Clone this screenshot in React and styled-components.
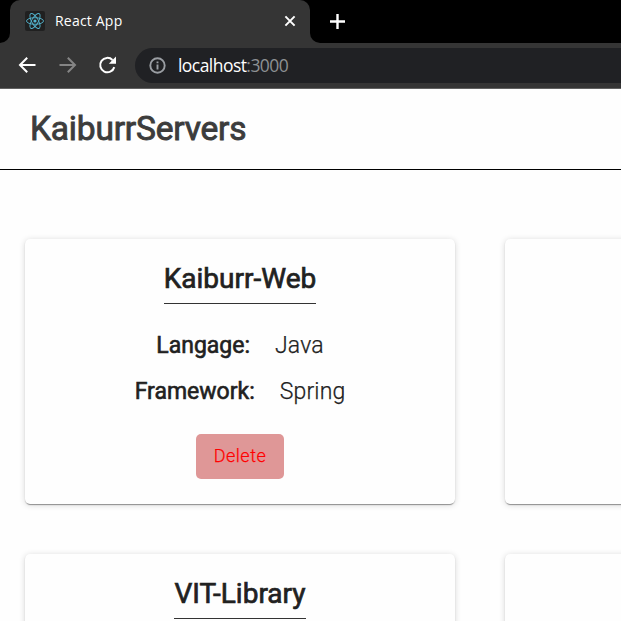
import React from 'react';
import styled, { createGlobalStyle } from 'styled-components';

const GlobalStyle = createGlobalStyle`
  * { box-sizing: border-box; }
  html, body { margin: 0; padding: 0; background: #fefefe; overflow: hidden; }
`;

const Window = styled.div`
  width: 621px;
  height: 621px;
  overflow: hidden;
  background: #fefefe;
  font-family: Roboto, sans-serif;
  color: #212121;
`;

const TabStrip = styled.div`
  display: flex;
  height: 43px;
  background: #353535;
`;

const StripEdge = styled.div`
  width: 10px;
  background: #000;
  border-bottom-right-radius: 10px;
`;

const TabSlot = styled.div`
  display: flex;
  background: linear-gradient(#000 0 20px, #353535 20px);
`;

const Tab = styled.div`
  width: 300px;
  display: flex;
  align-items: center;
  padding: 0 13px 1px 15px;
  background: #353535;
  border-radius: 10px 10px 0 0;
`;

const TabTitle = styled.span`
  flex: 1;
  margin-left: 10px;
  font: 14px/20px "Open Sans", sans-serif;
  letter-spacing: 0.2px;
  color: #fff;
`;

const StripRest = styled.div`
  flex: 1;
  display: flex;
  align-items: center;
  padding: 0 0 1px 19px;
  background: #000;
  border-bottom-left-radius: 10px;
`;

const Toolbar = styled.div`
  display: flex;
  align-items: center;
  height: 46px;
  padding: 0 0 1px 17px;
  background: #353535;
  border-bottom: 1px solid #616161;
`;

const NavIcon = styled.svg`
  display: block;
  width: 20px;
  height: 20px;
  margin-right: 20px;
  flex: none;
`;

const AddressBar = styled.div`
  flex: 1;
  height: 35px;
  margin: 1px 0 0 -2px;
  display: flex;
  align-items: center;
  padding-left: 14px;
  background: #202124;
  border-radius: 18px 0 0 18px;
`;

const Address = styled.span`
  margin: 0 0 2px 12px;
  font: 17.5px/24px "Open Sans", sans-serif;
  letter-spacing: -0.55px;
  color: #fff;
`;

const Port = styled.span`
  color: #8d9093;
`;

const Header = styled.header`
  height: 81px;
  padding: 0 30px 1px;
  display: flex;
  align-items: center;
  background: #fefefe;
  border-bottom: 1px solid #000;
`;

const Brand = styled.h1`
  margin: 0;
  font-size: 33.5px;
  line-height: 40px;
  font-weight: 400;
  letter-spacing: -0.2px;
  -webkit-text-stroke: 0.9px #3c3c3c;
  color: #3c3c3c;
`;

const Grid = styled.main`
  display: grid;
  grid-template-columns: 430px 430px;
  grid-auto-rows: 265px;
  gap: 50px;
  padding: 69px 25px;
`;

const Card = styled.section`
  display: flex;
  flex-direction: column;
  align-items: center;
  background: #fefefe;
  border-radius: 5px;
  box-shadow: 0 3px 1px -2px rgba(0, 0, 0, 0.2), 0 1px 1px rgba(0, 0, 0, 0.22),
    0 1px 6px rgba(0, 0, 0, 0.16);
`;

const CardTitle = styled.h2`
  margin: 20px 0 19px;
  height: 45px;
  border-bottom: 1px solid #333;
  font-size: 28px;
  line-height: 40px;
  font-weight: 400;
  -webkit-text-stroke: 0.7px #212121;
`;

const Detail = styled.div`
  display: flex;
  gap: 25px;
  height: 46px;
  font-size: 23px;
  line-height: 46px;
`;

const Label = styled.span`
  -webkit-text-stroke: 0.6px #212121;
`;

const Value = styled.span`
  font-weight: 300;
  letter-spacing: 0.15px;
  -webkit-text-stroke: 0.25px #212121;
`;

const DeleteButton = styled.button`
  width: 88px;
  height: 45px;
  margin-top: 19px;
  padding: 0 0 2px;
  border: 0;
  border-radius: 5px;
  background: #df9797;
  color: #ff0000;
  font: 300 18px/43px Roboto, sans-serif;
  letter-spacing: 0.5px;
  -webkit-text-stroke: 0.25px #ff0000;
`;

const servers = [
  { name: 'Kaiburr-Web', language: 'Java', framework: 'Spring' },
  {},
  { name: 'VIT-Library' },
  {},
];

function ReactLogo() {
  return (
    <svg width="20" height="20" viewBox="0 0 20 20">
      <rect width="20" height="20" rx="2" fill="#202020" />
      <g fill="none" stroke="#53b5cf" strokeWidth="0.9">
        <ellipse cx="10" cy="10" rx="8.5" ry="3.3" />
        <ellipse cx="10" cy="10" rx="8.5" ry="3.3" transform="rotate(60 10 10)" />
        <ellipse cx="10" cy="10" rx="8.5" ry="3.3" transform="rotate(120 10 10)" />
      </g>
      <circle cx="10" cy="10" r="1.6" fill="#53b5cf" />
    </svg>
  );
}

function ServerCard({ server }) {
  return (
    <Card>
      {server.name && <CardTitle>{server.name}</CardTitle>}
      {server.language && (
        <>
          <Detail>
            <Label>Langage:</Label>
            <Value>{server.language}</Value>
          </Detail>
          <Detail>
            <Label>Framework:</Label>
            <Value>{server.framework}</Value>
          </Detail>
          <DeleteButton>Delete</DeleteButton>
        </>
      )}
    </Card>
  );
}

export default function App() {
  return (
    <Window>
      <GlobalStyle />
      <TabStrip>
        <StripEdge />
        <TabSlot>
          <Tab>
            <ReactLogo />
            <TabTitle>React App</TabTitle>
            <svg width="14" height="14" viewBox="0 0 14 14">
              <path d="M2.4 2.4l9.2 9.2M11.6 2.4l-9.2 9.2" stroke="#fff" strokeWidth="2" />
            </svg>
          </Tab>
        </TabSlot>
        <StripRest>
          <svg width="17" height="17" viewBox="0 0 17 17">
            <path d="M8.5 1v15M1 8.5h15" stroke="#fff" strokeWidth="2.4" />
          </svg>
        </StripRest>
      </TabStrip>
      <Toolbar>
        <NavIcon viewBox="0 0 20 20">
          <path d="M18.5 10H3.5M10.2 2.8L3 10l7.2 7.2" fill="none" stroke="#fff" strokeWidth="2" />
        </NavIcon>
        <NavIcon viewBox="0 0 20 20">
          <path d="M2.5 10h15M10.8 2.8L18 10l-7.2 7.2" fill="none" stroke="#858585" strokeWidth="2" />
        </NavIcon>
        <NavIcon viewBox="0 0 20 20">
          <path d="M17.3 12.1A7.2 7.2 0 1 1 15.5 5" fill="none" stroke="#fff" strokeWidth="2" />
          <path d="M19 1.6v7.2h-7.2z" fill="#fff" />
        </NavIcon>
        <AddressBar>
          <svg width="17" height="17" viewBox="0 0 17 17">
            <circle cx="8.5" cy="8.5" r="7.2" fill="none" stroke="#9a9ea3" strokeWidth="1.9" />
            <path d="M8.5 7.5v5M8.5 4.4v1.8" stroke="#9a9ea3" strokeWidth="1.9" />
          </svg>
          <Address>
            localhost<Port>:3000</Port>
          </Address>
        </AddressBar>
      </Toolbar>
      <Header>
        <Brand>KaiburrServers</Brand>
      </Header>
      <Grid>
        {servers.map((server, index) => (
          <ServerCard key={index} server={server} />
        ))}
      </Grid>
    </Window>
  );
}
